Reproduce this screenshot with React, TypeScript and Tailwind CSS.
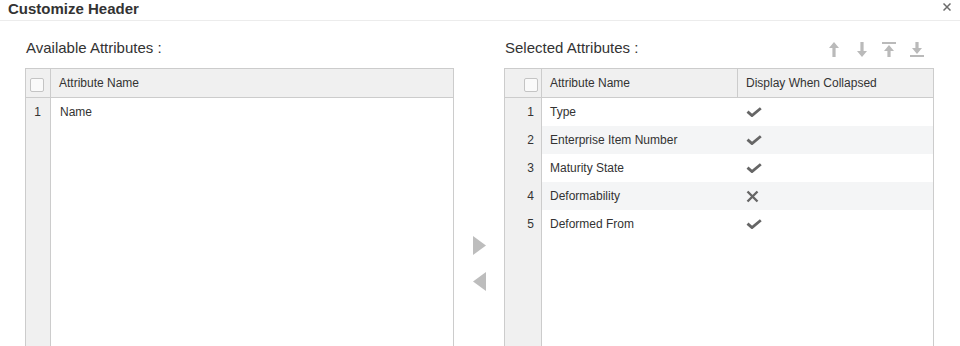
import React from 'react';

type Attr = { name: string; shown: boolean };

const available = ['Name'];

const selected: Attr[] = [
  { name: 'Type', shown: true },
  { name: 'Enterprise Item Number', shown: true },
  { name: 'Maturity State', shown: true },
  { name: 'Deformability', shown: false },
  { name: 'Deformed From', shown: true },
];

function CheckBox() {
  return <div className="w-[14px] h-[14px] rounded-[2px] border border-[#c4c4c4] bg-[#fafafa]" />;
}

function CheckMark() {
  return (
    <svg width="16" height="10" viewBox="0 0 16 10">
      <polyline points="1.5,4.6 6,8.6 14.8,1.2" fill="none" stroke="#666" strokeWidth="2.8" />
    </svg>
  );
}

function CrossMark() {
  return (
    <svg width="13" height="13" viewBox="0 0 13 13">
      <path d="M1.5 1.5 L11.5 11.5 M11.5 1.5 L1.5 11.5" stroke="#666" strokeWidth="2.4" />
    </svg>
  );
}

function MoveIcons() {
  const c = '#bababa';
  return (
    <div className="flex items-start justify-end pr-[10px] pt-[21px]">
      <svg width="10" height="15" viewBox="0 0 10 15">
        <path d="M5 0 L10 6 H6.6 V15 H3.4 V6 H0 Z" fill={c} />
      </svg>
      <svg width="10" height="15" viewBox="0 0 10 15" className="ml-[18px]">
        <path d="M3.4 0 H6.6 V9 H10 L5 15 L0 9 H3.4 Z" fill={c} />
      </svg>
      <svg width="14" height="15" viewBox="0 0 14 15" className="ml-[15px]">
        <rect x="0" y="0" width="14" height="2" fill={c} />
        <path d="M7 3 L12 9 H8.6 V15 H5.4 V9 H2 Z" fill={c} />
      </svg>
      <svg width="14" height="15" viewBox="0 0 14 15" className="ml-[14px]">
        <path d="M5.4 0 H8.6 V6 H12 L7 12 L2 6 H5.4 Z" fill={c} />
        <rect x="0" y="13" width="14" height="2" fill={c} />
      </svg>
    </div>
  );
}

function AvailableTable() {
  return (
    <div className="h-[300px] border border-[#cccccc] flex flex-col">
      <div className="flex h-[29px] shrink-0 border-b border-[#cccccc] bg-[#f0f0f0]">
        <div className="w-[25px] border-r border-[#cccccc] pl-[4px] pt-[9px]">
          <CheckBox />
        </div>
        <div className="pl-[8px] leading-[28px]">Attribute Name</div>
      </div>
      <div className="flex flex-1">
        <div className="w-[25px] border-r border-[#cccccc] bg-[#f0f0f0]">
          {available.map((_, i) => (
            <div key={i} className="h-[28px] leading-[29px] text-right pr-[9px]">{i + 1}</div>
          ))}
        </div>
        <div className="flex-1">
          {available.map((name) => (
            <div key={name} className="h-[28px] leading-[29px] pl-[9px]">{name}</div>
          ))}
        </div>
      </div>
    </div>
  );
}

function SelectedTable() {
  return (
    <div className="h-[300px] border border-[#cccccc] flex flex-col">
      <div className="flex h-[29px] shrink-0 border-b border-[#cccccc] bg-[#f0f0f0]">
        <div className="w-[37px] border-r border-[#cccccc] flex justify-end pr-[3px] pt-[9px]">
          <CheckBox />
        </div>
        <div className="w-[196px] border-r border-[#cccccc] pl-[8px] leading-[28px]">Attribute Name</div>
        <div className="flex-1 pl-[8px] leading-[28px]">Display When Collapsed</div>
      </div>
      <div className="flex flex-1">
        <div className="w-[37px] border-r border-[#cccccc] bg-[#f0f0f0]">
          {selected.map((_, i) => (
            <div key={i} className="h-[28px] leading-[29px] text-right pr-[7px]">{i + 1}</div>
          ))}
        </div>
        <div className="flex-1">
          {selected.map((a, i) => (
            <div key={a.name} className={`flex h-[28px] ${i % 2 === 1 ? 'bg-[#f4f5f6]' : 'bg-white'}`}>
              <div className="w-[196px] pl-[8px] leading-[29px]">{a.name}</div>
              <div className="flex-1 pl-[8px] flex items-center">
                {a.shown ? <CheckMark /> : <CrossMark />}
              </div>
            </div>
          ))}
        </div>
      </div>
    </div>
  );
}

export default function App() {
  return (
    <div className="w-[960px] h-[346px] overflow-hidden bg-white text-[#333] font-['Liberation_Sans',Arial,sans-serif]">
      <div className="flex h-[21px] justify-between border-b border-[#ececec] pl-[8px] pr-[9px]">
        <div className="text-[15px] font-bold leading-[17px] text-[#333]">Customize Header</div>
        <svg width="8" height="8" viewBox="0 0 8 8" className="mt-[3px]">
          <path d="M0.5 0.5 L7.5 7.5 M7.5 0.5 L0.5 7.5" stroke="#6b6b6b" strokeWidth="1.5" />
        </svg>
      </div>

      <div className="flex pl-[25px] text-[12px]">
        <div className="w-[429px]">
          <div className="h-[47px] pt-[18px] text-[15px] leading-[17px] pl-[1px]">Available Attributes :</div>
          <AvailableTable />
        </div>

        <div className="w-[50px] flex flex-col items-center pt-[215px]">
          <svg width="13" height="19" viewBox="0 0 13 19">
            <path d="M0 0 L13 9.5 L0 19 Z" fill="#bdbdbd" />
          </svg>
          <svg width="13" height="19" viewBox="0 0 13 19" className="mt-[17px]">
            <path d="M13 0 L0 9.5 L13 19 Z" fill="#bdbdbd" />
          </svg>
        </div>

        <div className="w-[430px]">
          <div className="h-[47px] flex justify-between">
            <div className="pt-[18px] text-[15px] leading-[17px] pl-[1px]">Selected Attributes :</div>
            <MoveIcons />
          </div>
          <SelectedTable />
        </div>
      </div>
    </div>
  );
}
